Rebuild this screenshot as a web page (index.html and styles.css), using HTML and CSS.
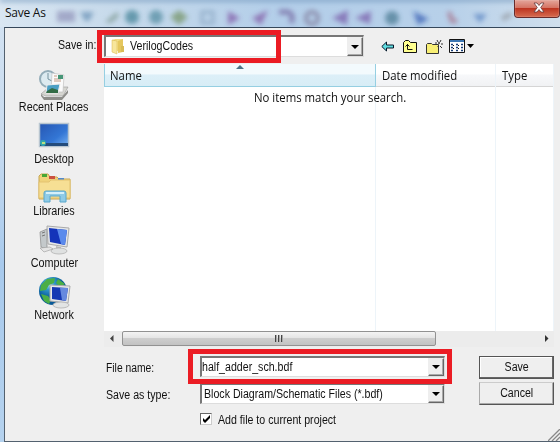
FILE: index.html
```html
<!DOCTYPE html>
<html lang="en">
<head>
<meta charset="utf-8">
<title>Save As</title>
<link rel="stylesheet" href="styles.css">
</head>
<body>
<div class="window">
  <header class="titlebar">
    <svg class="glass" width="560" height="28" viewBox="0 0 560 28">
      <defs><filter id="soft" x="-10%" y="-60%" width="120%" height="220%"><feGaussianBlur stdDeviation="2.5"/></filter></defs>
      <g filter="url(#soft)" opacity=".6">
        <path d="M0 -2H560V2H0Z" fill="#668db5"/>
        <path d="M57 11h18v11H57z" fill="#8585b0"/>
        <path d="M80 12h14l-5 9h-4z" fill="#517fa9"/>
        <path d="M105 22l12-10 2 4-8 7z" fill="#688578"/>
        <circle cx="132" cy="17" r="7" fill="#256f85"/>
        <circle cx="156" cy="17" r="7" fill="#3a7c91"/>
        <path d="M179 10l9 7-9 8-9-8z" fill="#66864c"/>
        <path d="M202 12h11v11h-11z" fill="none" stroke="#7896b4" stroke-width="3"/>
        <path d="M228 11l12 7-12 7z" fill="#723b96"/>
        <path d="M268 10l-16 8 9 7z" fill="#743c94"/>
        <path d="M279 12h9c5 2 5 6 3 11" fill="none" stroke="#654e8e" stroke-width="5"/>
        <circle cx="312" cy="18" r="6" fill="none" stroke="#716485" stroke-width="4"/>
        <path d="M348 10l-16 8 15 7zM371 11l-16 7 15 6z" fill="#69409a"/>
        <circle cx="392" cy="18" r="7" fill="#326780"/>
        <path d="M413 11l16 8-11 6z" fill="#1742a6"/>
        <path d="M449 12l3 9h5" fill="none" stroke="#a04d65" stroke-width="4"/>
        <path d="M473 14h14l-7 9z" fill="#416fb8"/>
        <path d="M502 19l9-5" stroke="#888b91" stroke-width="5"/>
      </g>
    </svg>
    <span class="title">Save As</span>
    <button class="close" aria-label="Close"><svg width="12" height="11" viewBox="0 0 12 11"><path d="M1 1h3l2 2.5L8 1h3L7.700 5.500 11 10H8L6 7.600 4 10H1l3.300-4.500z" fill="#fff" stroke="#64383a" stroke-width=".8"/></svg></button>
  </header>

  <main class="dialog">
    <div class="lookin">
      <label class="lookin-label"><span class="sys">Save in:</span></label>
      <div class="combo combo-top">
        <svg class="folder" width="14" height="17" viewBox="0 0 14 17"><path d="M1 2l5-1v14l-5-1z" fill="#e9cd65"/><path d="M4 1h8v12H4z" fill="#f3df87"/><path d="M1 2l5 1v13l-5-2z" fill="#f7e69c" stroke="#d8b64e" stroke-width=".5"/><path d="M7 3l5-2v13l-5 1z" fill="#e5c75e"/><path d="M10 8h3v6h-3z" fill="#d8bb55"/></svg>
        <span class="value"><span class="sys">VerilogCodes</span></span>
        <span class="drop"><i></i></span>
      </div>
      <nav class="tools">
        <svg width="13" height="11" viewBox="0 0 13 11"><path d="M.8 5.500L5.500 1v3h7v3h-7v3z" fill="#5fdde0" stroke="#07192b"/></svg>
        <svg width="16" height="15" viewBox="0 0 16 15"><path d="M1.500 13.500v-10l2-2h3l2 2h6v10z" fill="#ffff91" stroke="#111"/><path d="M5.500 5v5.500h5M3.500 7.500l2-2 2 2" fill="none" stroke="#111"/></svg>
        <svg width="17" height="16" viewBox="0 0 17 16"><path d="M.5 14.500v-9l1-1h4l1 1h6v9z" fill="#f8ef75" stroke="#333"/><path d="M11 1l1 2M15 1l-1 2M9 4h2M15 5h2M14 7l2 2M12.500 3.500h1v1h-1zM12 7v1" stroke="#333" fill="none"/></svg>
        <svg width="26" height="15" viewBox="0 0 26 15"><path d="M.5 .5h15v13H.5z" fill="#fff" stroke="#111"/><path d="M1 1h14v2H1z" fill="#3c76b2"/><path d="M2 5.500h2M2 8.500h2M2 11.500h2M7 5.500h2M7 8.500h2M7 11.500h2M12 5.500h2M12 8.500h2M12 11.500h2" stroke="#183e78" stroke-width="1.500"/><path d="M4 6.500h1M4 9.500h1M9 6.500h1M9 9.500h1" stroke="#111"/><path d="M18 5h7l-3.500 4z" fill="#000"/></svg>
      </nav>
    </div>

    <div class="browser">
      <aside class="places">
        <div class="place">
          <svg width="34" height="34" viewBox="0 0 34 34"><path d="M4 27l8-7h19l-5 9H9z" fill="#d6d6d1" stroke="#999" stroke-width=".6"/><path d="M4 27l3 3h18l6-7v3l-6 7H7l-3-4z" fill="#8d8d89"/><circle cx="11" cy="12" r="8" fill="#dceaf0" stroke="#94adb9" stroke-width="2"/><path d="M11 6v6l4 2" fill="none" stroke="#75929e"/><path d="M15 6l12 2-1 17H14z" fill="#fafafa" stroke="#bbb" stroke-width=".6"/><path d="M17 9h3M17 12h7M17 14h7" stroke="#c29a84"/><path d="M21 8h5v4h-5z" fill="#479677"/><path d="M10 18l13-1-2 9H9z" fill="#4b9fc4" stroke="#eee"/><path d="M10 24l5-3 6 2v3H9z" fill="#326c45"/></svg>
          <span class="sys">Recent Places</span>
        </div>
        <div class="place">
          <svg width="34" height="34" viewBox="0 0 34 34"><defs><linearGradient id="desk" x2="1" y2="1"><stop stop-color="#2656b2"/><stop offset=".6" stop-color="#3376d5"/><stop offset="1" stop-color="#78b3f3"/></linearGradient></defs><path d="M2.500 4.500h29v23h-29z" fill="url(#desk)" stroke="#b8c5d0" stroke-width="1.500"/><path d="M3 24h28v3H3z" fill="#244c7c"/><circle cx="6" cy="24" r="3" fill="#31a6ad"/><path d="M5 23h3v2H5z" fill="#b9de83"/></svg>
          <span class="sys">Desktop</span>
        </div>
        <div class="place">
          <svg width="34" height="34" viewBox="0 0 34 34"><path d="M2 28V5l2-2h7l2 3h7l2 2h11v20z" fill="#efd27a" stroke="#c6a551"/><path d="M5 3h5v3H5z" fill="#46a735"/><path d="M12 5h6v3h-6z" fill="#cb5141"/><path d="M21 7h6v3h-6z" fill="#548ac9"/><path d="M2 11h10l2-2h19v18H2z" fill="#f6df94" stroke="#e3c370"/><path d="M7 31V22q0-2 2-2h18q2 0 2 2v9h-6v-6H13v6z" fill="#8fcbe6" stroke="#58a6cb"/><path d="M9 22h18" stroke="#d5f0fa" stroke-width="2"/></svg>
          <span class="sys">Libraries</span>
        </div>
        <div class="place">
          <svg width="34" height="34" viewBox="0 0 34 34"><path d="M3 9l7-3v20l-6-2z" fill="#c4c9cb" stroke="#888" stroke-width=".7"/><path d="M5 10l3-1M5 13l3-1" stroke="#777"/><path d="M10 3l22 2-2 19-19-3z" fill="#e5e7e8" stroke="#aaa"/><path d="M12 5l18 2-2 15-15-3z" fill="#1434b9"/><path d="M20 6l10 1-2 15-4-1z" fill="#5a8aec"/><path d="M19 23l5 1v3h-5z" fill="#bbb"/><ellipse cx="22" cy="28" rx="8" ry="3" fill="#dfe1e1" stroke="#aaa" stroke-width=".7"/><path d="M3 25l10-1 3 2-9 3z" fill="#e5e5e5" stroke="#999" stroke-width=".6"/></svg>
          <span class="sys">Computer</span>
        </div>
        <div class="place">
          <svg width="34" height="34" viewBox="0 0 34 34"><defs><radialGradient id="earth" cx=".35" cy=".25"><stop stop-color="#a9e6f4"/><stop offset=".4" stop-color="#3197cd"/><stop offset="1" stop-color="#075997"/></radialGradient></defs><circle cx="16" cy="16" r="14" fill="url(#earth)"/><path d="M4 10l6-6 8-1-1 5-5 2-3 5-6 1zM21 4l7 5-5 3-4-4zM4 19l7 2 3 4-2 4-5-3z" fill="#4bae47"/><path d="M13 10l20 1-2 17-18-2z" fill="#e6e7e8" stroke="#aaa"/><path d="M15 12l16 1-2 13-14-2z" fill="#1638b3"/><path d="M23 13l8 0-2 13-4-1z" fill="#6689df"/><ellipse cx="24" cy="30" rx="8" ry="3" fill="#e2e4e4" stroke="#bbb"/></svg>
          <span class="sys">Network</span>
        </div>
      </aside>
      <section class="list">
        <div class="cols">
          <div class="col sorted"><div class="head"><span class="ui">Name</span></div></div>
          <div class="col"><div class="head"><span class="ui">Date modified</span></div></div>
          <div class="col"><div class="head"><span class="ui">Type</span></div></div>
          <svg class="sort" width="8" height="4" viewBox="0 0 8 4"><path d="M4 0l4 4H0z" fill="#4c7386"/></svg>
          <p class="empty"><span class="ui">No items match your search.</span></p>
        </div>
        <div class="scroll">
          <svg width="18" height="15" viewBox="0 0 18 15"><path d="M9.500 4v7L6 7.500z" fill="#444"/></svg>
          <div class="thumb"><i></i><i></i><i></i></div>
          <svg class="right" width="17" height="15" viewBox="0 0 17 15"><path d="M8 4v7l3.500-3.500z" fill="#333"/></svg>
        </div>
      </section>
    </div>

    <form class="fields">
      <label><span class="sys tight">File name:</span></label>
      <div class="combo"><span class="value"><span class="sys">half_adder_sch.bdf</span></span><span class="drop"><i></i></span></div>
      <button type="button" class="btn default"><span class="sys">Save</span></button>
      <label><span class="sys">Save as type:</span></label>
      <div class="combo second"><span class="value"><span class="sys">Block Diagram/Schematic Files (*.bdf)</span></span><span class="drop"><i></i></span></div>
      <button type="button" class="btn"><span class="sys">Cancel</span></button>
      <div class="check"><span class="box"><svg width="9" height="9" viewBox="0 0 9 9"><path d="M1 3v3l2 2 5-5V0L3 5z" fill="#000"/></svg></span><span class="sys">Add file to current project</span></div>
    </form>
  </main>
  <svg class="grip" width="12" height="12" viewBox="0 0 12 12"><path d="M0 12L12 0M4 12l8-8M8 12l4-4" stroke="#888" stroke-width="1.300"/></svg>
  <div class="mark mark-folder"></div>
  <div class="mark mark-file"></div>
</div>
</body>
</html>
```
FILE: styles.css
```css
* { box-sizing: border-box; }
body { margin: 0; overflow: hidden; font: 12px "Liberation Sans", Arial, sans-serif; color: #111; }
.window { position: relative; width: 560px; height: 442px; display: flex; flex-direction: column; background: linear-gradient(#d4e3f2, #c9dcf0 30%, #a8caed 60%, #b5d2ee); overflow: hidden; }
/* Condensed system lettering */
.sys { display: inline-block; transform: scaleX(.885); transform-origin: left; }
.tight { transform: scaleX(.86); }
.ui { display: inline-block; transform: scaleX(.91); transform-origin: left; }
.titlebar { position: relative; height: 27px; flex: none; background: linear-gradient(90deg, #d9e6f2, #c7daeb 20%, #b3cee9 50%, #b7d0e9 80%, #d0dfed); }
.glass { position: absolute; left: 0; top: 0; }
.title { position: absolute; left: 5px; top: 4px; font: 12px/17px "Open Sans", sans-serif; letter-spacing: -.25px; }
.close { position: absolute; right: 0; top: 0; width: 46px; height: 18px; border: 1px solid #682b2b; border-width: 0 1px 1px; border-radius: 0 0 4px 4px; background: linear-gradient(#e4a69b, #d57464 45%, #bd3521 50%, #d66b50); padding: 2px 0 0 3px; display: flex; justify-content: center; box-shadow: inset 0 0 1px #fff; }
.dialog { flex: 1; margin-left: 4px; border: 1px solid #53616f; border-top-color: #35475a; border-right: 0; background: #efefef; min-height: 0; }
.lookin { display: flex; height: 36px; padding-top: 7px; }
.lookin-label { width: 99px; flex: none; padding-left: 53px; line-height: 20px; white-space: nowrap; }
.combo { display: flex; height: 21px; background: #fff; border: 1px solid #777; border-width: 2px 1px 1px 2px; border-color: #777 #ddd #ddd #777; min-width: 0; }
.combo-top { width: 260px; height: 22px; }
.folder { margin: 1px 5px 0 5px; flex: none; }
.value { flex: 1; min-width: 0; white-space: nowrap; line-height: 18px; }
.second .value { padding-left: 2px; }
.drop { flex: none; width: 16px; background: #eee; border: 1px solid; border-color: #eee #666 #666 #eee; box-shadow: inset -1px -1px #aaa; display: flex; justify-content: center; align-items: center; }
.drop i { border: 4px solid transparent; border-top-color: #000; border-bottom: 0; }
.tools { display: flex; align-items: center; height: 23px; margin-left: 17px; }
.tools svg:nth-child(2) { margin-left: 8px; }
.tools svg:nth-child(3) { margin-left: 8px; }
.tools svg:nth-child(4) { margin-left: 6px; }
.browser { display: flex; height: 283px; }
.places { width: 99px; padding-top: 3px; }
.place { height: 52px; display: flex; flex-direction: column; align-items: center; line-height: 14px; white-space: nowrap; }
.place svg { margin: 0 2px 0 0; flex: none; }
.place .sys { margin: -1px 1px 0 0; transform-origin: center; transform: scaleX(.9); }
.list { width: 450px; display: flex; flex-direction: column; }
.cols { position: relative; height: 267px; display: grid; grid-template-columns: 272px 120px 58px; background: #fff; font: 12.5px/20px "Open Sans", sans-serif; white-space: nowrap; }
.col { border-right: 1px solid #edf4f9; }
.head { height: 23px; padding: 2px 0 0 6px; border-bottom: 1px solid #d5d5d5; background: linear-gradient(#fff 45%, #f7f8fa 50%, #f1f2f4); }
.sorted .head { border: 1px solid #96cfe2; border-top: 0; padding-left: 5px; background: linear-gradient(#f3fafd 45%, #dceff8 50%, #d8edf6); margin-right: -1px; }
.sort { position: absolute; left: 132px; top: 1px; }
.empty { position: absolute; left: 150px; top: 24px; margin: 0; }
.scroll { height: 16px; display: flex; background: #ececec; }
.thumb { width: 314px; height: 15px; border: 1px solid #929292; border-radius: 2px; background: linear-gradient(#f4f4f4, #e5e5e5 45%, #cecece 50%, #c2c2c2); display: flex; justify-content: center; align-items: center; gap: 1px; }
.thumb i { width: 2px; height: 7px; border-left: 1px solid #444; background: #aaa; }
.right { margin-left: auto; }
.fields { display: grid; grid-template-columns: 94px 245px 34px 75px; grid-template-rows: 27px 27px 22px; margin: 9px 0 0 101px; }
.fields label { grid-column: 1; line-height: 24px; white-space: nowrap; }
.fields .combo { grid-column: 2; }
.btn { grid-column: 4; font: inherit; color: inherit; height: 23px; padding: 0; background: #efefef; border: 1px solid; border-color: #ccc #555 #555 #aaa; box-shadow: inset -1px -1px #aaa; line-height: 19px; }
.btn .sys { transform-origin: center; }
.default { border-color: #555; box-shadow: inset -1px -1px #666, inset 1px 1px #fff; }
.fields .btn:last-of-type { margin-top: -1px; }
.check { grid-column: 2 / 5; display: flex; gap: 6px; line-height: 20px; white-space: nowrap; }
.box { width: 12px; height: 12px; margin-top: 3px; border: 1px solid; border-color: #666 #ccc #ccc #666; background: #fff; display: flex; justify-content: center; align-items: center; }
.grip { position: absolute; right: 0; bottom: 1px; }
.mark { position: absolute; border: 5px solid #eb1c24; }
.mark-folder { left: 97px; top: 30px; width: 184px; height: 33px; }
.mark-file { left: 188px; top: 349px; width: 264px; height: 35px; }
```
